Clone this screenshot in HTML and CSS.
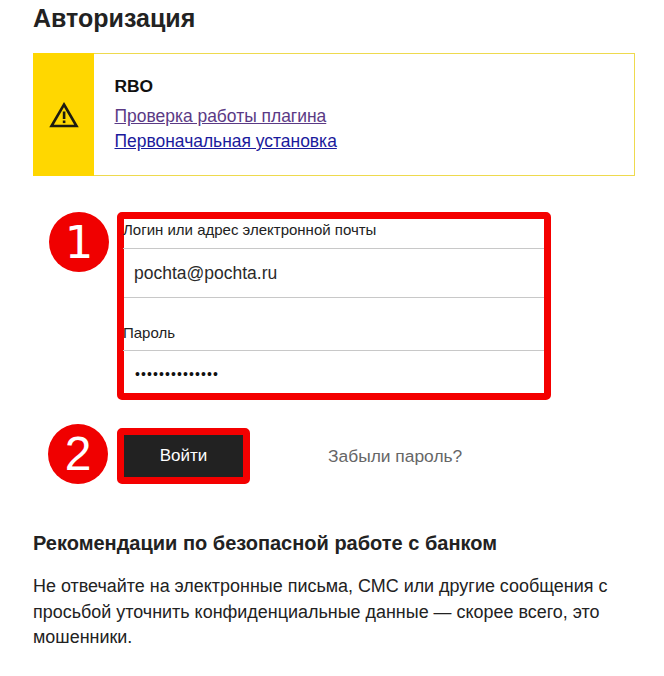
FILE: index.html
```html
<!DOCTYPE html>
<html lang="ru">
<head>
<meta charset="utf-8">
<title>Авторизация</title>
<link rel="stylesheet" href="styles.css">
</head>
<body>
<main class="page">
  <h1 class="title">Авторизация</h1>
  <section class="alert">
    <div class="alert-side">
      <svg class="alert-icon" width="30" height="28" viewBox="0 0 30 28" aria-hidden="true">
        <path d="M15 3.5 L27.5 25 H2.5 Z" fill="none" stroke="#1d1b10" stroke-width="2.6" stroke-linejoin="miter"/>
        <rect x="13.8" y="10.5" width="2.6" height="7.5" fill="#1d1b10"/>
        <rect x="13.8" y="19.5" width="2.6" height="2.6" fill="#1d1b10"/>
      </svg>
    </div>
    <div class="alert-body">
      <div class="alert-title">RBO</div>
      <a class="link visited" href="#">Проверка работы плагина</a>
      <a class="link" href="#">Первоначальная установка</a>
    </div>
  </section>
  <form class="form">
    <div class="step step-fields">
      <div class="badge badge-one">1</div>
      <div class="frame fields">
        <div class="label label-first">Логин или адрес электронной почты</div>
        <div class="value value-login">pochta@pochta.ru</div>
        <div class="label label-second">Пароль</div>
        <div class="value value-pass">••••••••••••••</div>
      </div>
    </div>
    <div class="step step-submit">
      <div class="badge badge-two">2</div>
      <div class="frame button-frame"><div class="button">Войти</div></div>
      <span class="forgot">Забыли пароль?</span>
    </div>
  </form>
  <h2 class="subtitle">Рекомендации по безопасной работе с банком</h2>
  <p class="text">Не отвечайте на электронные письма, СМС или другие сообщения с просьбой уточнить конфиденциальные данные — скорее всего, это мошенники.</p>
</main>
</body>
</html>
```
FILE: styles.css
```css
* { box-sizing: border-box; }
html, body { margin: 0; padding: 0; background: #fff; }
body { font-family: "Liberation Sans", Arial, sans-serif; color: #222; width: 664px; height: 676px; overflow: hidden; }
.page { padding: 3px 29px 0 33px; }
.title { margin: 0; font-size: 25px; line-height: 30px; font-weight: 700; color: #222; }
.alert { display: flex; height: 123px; margin-top: 20px; border: 1px solid #eeda4e; }
.alert-side { width: 61px; margin: -1px 0 -1px -1px; background: #ffd700; display: flex; align-items: center; justify-content: center; flex: none; }
.alert-body { padding: 21px 0 0 20.5px; display: flex; flex-direction: column; align-items: flex-start; }
.alert-title { font-size: 17.4px; line-height: 22px; font-weight: 700; color: #111; margin-bottom: 7px; }
.link { font-size: 17.45px; line-height: 25px; color: #1a1a9c; text-decoration: underline; }
.visited { color: #5b3a85; }
.form { margin-top: 36px; padding-left: 16px; }
.step { display: flex; align-items: flex-start; }
.badge { width: 60px; height: 60px; border-radius: 50%; background: #f00000; color: #fff; display: flex; align-items: center; justify-content: center; flex: none; margin-right: 8px; }
.badge-one { font-family: "DejaVu Sans", sans-serif; font-size: 45px; font-weight: 400; }
.badge-two { font-size: 48px; margin-top: -5px; margin-right: 9px; margin-left: -1px; }
.frame { border: 7px solid #f40000; border-radius: 5px; }
.fields { width: 434px; height: 188px; }
.label { font-size: 15px; line-height: 18px; color: #222; height: 30px; border-bottom: 1px solid #c8c8c8; margin-left: -1px; }
.label-first { padding-top: 2px; }
.label-second { height: 53px; padding-top: 26px; }
.value { font-size: 17.5px; color: #2a2a2a; padding-left: 10px; }
.value-login { height: 49px; line-height: 48px; border-bottom: 1px solid #c8c8c8; }
.value-pass { line-height: 47px; font-size: 14px; letter-spacing: 1.1px; color: #111; padding-left: 11px; }
.step-submit { margin-top: 28px; align-items: center; }
.button-frame { width: 133px; height: 56px; }
.button { height: 100%; background: #222; color: #fff; font-size: 17px; display: flex; align-items: center; justify-content: center; }
.forgot { margin-left: 78px; font-size: 17.4px; color: #666; }
.subtitle { margin: 45px 0 0; font-size: 20px; line-height: 28px; font-weight: 700; color: #222; }
.text { margin: 17px 0 0; font-size: 17.94px; line-height: 25.5px; color: #222; }
```
